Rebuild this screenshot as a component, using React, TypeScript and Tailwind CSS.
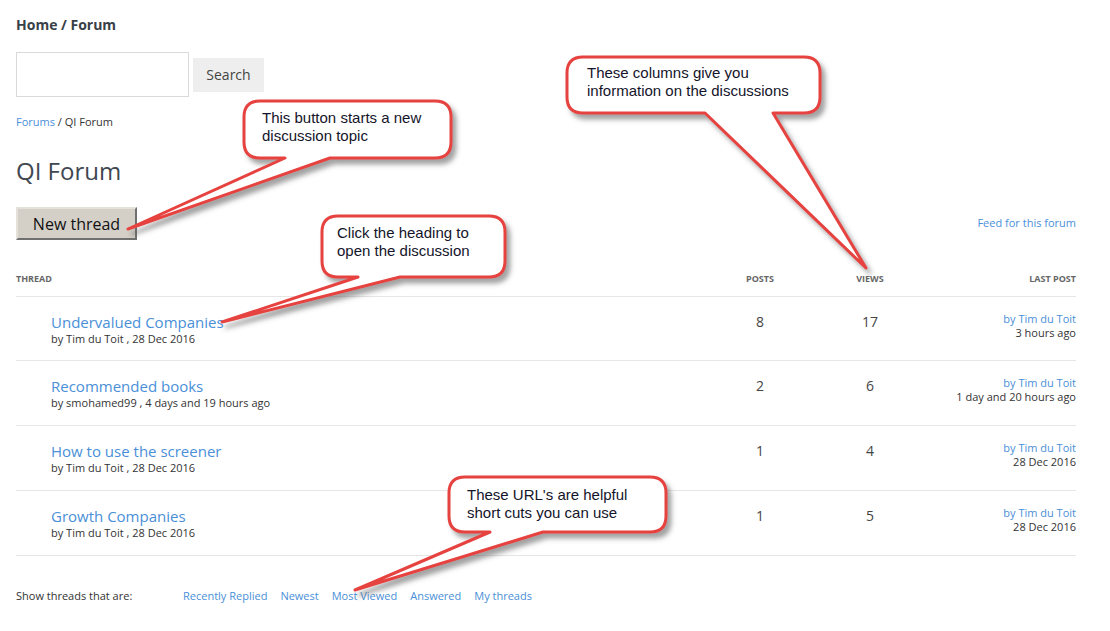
import React from 'react';

const threads = [
  { title: 'Undervalued Companies', by: 'by Tim du Toit , 28 Dec 2016', posts: 8, views: 17, last: '3 hours ago' },
  { title: 'Recommended books', by: 'by smohamed99 , 4 days and 19 hours ago', posts: 2, views: 6, last: '1 day and 20 hours ago' },
  { title: 'How to use the screener', by: 'by Tim du Toit , 28 Dec 2016', posts: 1, views: 4, last: '28 Dec 2016' },
  { title: 'Growth Companies', by: 'by Tim du Toit , 28 Dec 2016', posts: 1, views: 5, last: '28 Dec 2016' },
];

const filters = ['Recently Replied', 'Newest', 'Most Viewed', 'Answered', 'My threads'];

// bubble rect + tail base (on bottom edge) + tail tip
interface Callout {
  x: number;
  y: number;
  w: number;
  h: number;
  baseL: number;
  baseR: number;
  tip: [number, number];
  lines: string[];
  tx: number;
  ty: number;
}

const callouts: Callout[] = [
  { x: 244, y: 101, w: 207, h: 57, baseL: 285, baseR: 330, tip: [128, 229], lines: ['This button starts a new', 'discussion topic'], tx: 262, ty: 109 },
  { x: 567, y: 57, w: 253, h: 56, baseL: 705, baseR: 773, tip: [866, 268], lines: ['These columns give you', 'information on the discussions'], tx: 587, ty: 64 },
  { x: 322, y: 216, w: 183, h: 61, baseL: 358, baseR: 400, tip: [222, 322], lines: ['Click the heading to', 'open the discussion'], tx: 337, ty: 224 },
  { x: 449, y: 477, w: 217, h: 55, baseL: 490, baseR: 543, tip: [355, 590], lines: ["These URL's are helpful", 'short cuts you can use'], tx: 467, ty: 486 },
];

function bubblePath(c: Callout) {
  const r = 16;
  const { x, y, w, h } = c;
  const b = y + h;
  return [
    `M ${x + r} ${y}`,
    `H ${x + w - r}`,
    `Q ${x + w} ${y} ${x + w} ${y + r}`,
    `V ${b - r}`,
    `Q ${x + w} ${b} ${x + w - r} ${b}`,
    `H ${c.baseR}`,
    `L ${c.tip[0]} ${c.tip[1]}`,
    `L ${c.baseL} ${b}`,
    `H ${x + r}`,
    `Q ${x} ${b} ${x} ${b - r}`,
    `V ${y + r}`,
    `Q ${x} ${y} ${x + r} ${y}`,
    'Z',
  ].join(' ');
}

function Callouts() {
  return (
    <>
      <svg className="pointer-events-none absolute left-0 top-0" width={1110} height={631}>
        <defs>
          <filter id="shade" x="-20%" y="-20%" width="140%" height="160%">
            <feDropShadow dx="4" dy="5" stdDeviation="2.5" floodColor="#555" floodOpacity="0.55" />
          </filter>
        </defs>
        {callouts.map((c, i) => (
          <path
            key={i}
            d={bubblePath(c)}
            fill="#fff"
            stroke="#e5423f"
            strokeWidth={3}
            strokeLinejoin="round"
            filter="url(#shade)"
          />
        ))}
      </svg>
      {callouts.map((c, i) => (
        <div
          key={i}
          className="pointer-events-none absolute text-[15px] leading-[18px] text-[#14142a] whitespace-nowrap"
          style={{ left: c.tx, top: c.ty, fontFamily: '"Liberation Sans", Arial, sans-serif' }}
        >
          {c.lines.map((l) => (
            <div key={l}>{l}</div>
          ))}
        </div>
      ))}
    </>
  );
}

export default function App() {
  return (
    <div
      className="relative w-[1110px] h-[631px] overflow-hidden bg-white text-[#333]"
      style={{ fontFamily: '"Open Sans", "Noto Sans", sans-serif' }}
    >
      <div className="pl-4 pr-[34px] pt-[15px]">
        <div className="text-[14px] leading-5 font-bold text-[#384048]">Home / Forum</div>

        <div className="mt-[17px] flex items-center gap-1">
          <div className="h-[45px] w-[173px] border border-[#d9d9d9] bg-white" />
          <button className="h-[34px] w-[71px] bg-[#eeeeee] text-[14px] leading-[32px] text-[#444]">Search</button>
        </div>

        <div className="mt-[17px] text-[11px] leading-4">
          <span className="text-[#4a8fd8]">Forums</span> / QI Forum
        </div>

        <h1 className="mt-[25px] text-[24px] leading-8 font-normal text-[#3f4750]">QI Forum</h1>

        <div className="mt-[20px] flex items-center justify-between">
          <button className="h-[33px] w-[121px] border-2 border-t-[#e4e1da] border-l-[#e4e1da] border-b-[#707070] border-r-[#707070] bg-[#d4d0c8] text-[16px] text-[#111]">
            New thread
          </button>
          <span className="text-[11px] text-[#4a8fd8]">Feed for this forum</span>
        </div>

        <div className="mt-[31px] grid grid-cols-[704px_80px_140px_1fr] border-b border-[#e6e6e6] pb-[9px] text-[9px] leading-4 font-bold uppercase text-[#666]">
          <div>Thread</div>
          <div className="text-center">Posts</div>
          <div className="text-center">Views</div>
          <div className="text-right">Last post</div>
        </div>

        {threads.map((t, i) => (
          <div
            key={t.title}
            className={`grid grid-cols-[704px_80px_140px_1fr] border-b border-[#e6e6e6] pt-[16px] ${i === 0 ? 'h-[64px]' : 'h-[65px]'}`}
          >
            <div className="pl-[35px]">
              <div className="text-[15px] leading-[18px] text-[#4a8fd8]">{t.title}</div>
              <div className="text-[11px] leading-[15px] text-[#333]">{t.by}</div>
            </div>
            <div className="text-center text-[14px] leading-[18px] text-[#444]">{t.posts}</div>
            <div className="text-center text-[14px] leading-[18px] text-[#444]">{t.views}</div>
            <div className="-mt-[1px] text-right text-[11px] leading-[14px]">
              <div className="text-[#4a8fd8]">by Tim du Toit</div>
              <div className="text-[#333]">{t.last}</div>
            </div>
          </div>
        ))}

        <div className="mt-[32px] flex text-[11px] leading-4">
          <span className="w-[167px]">Show threads that are:</span>
          <div className="flex gap-[13px] text-[#4a8fd8]">
            {filters.map((f) => (
              <span key={f}>{f}</span>
            ))}
          </div>
        </div>
      </div>

      <Callouts />
    </div>
  );
}
